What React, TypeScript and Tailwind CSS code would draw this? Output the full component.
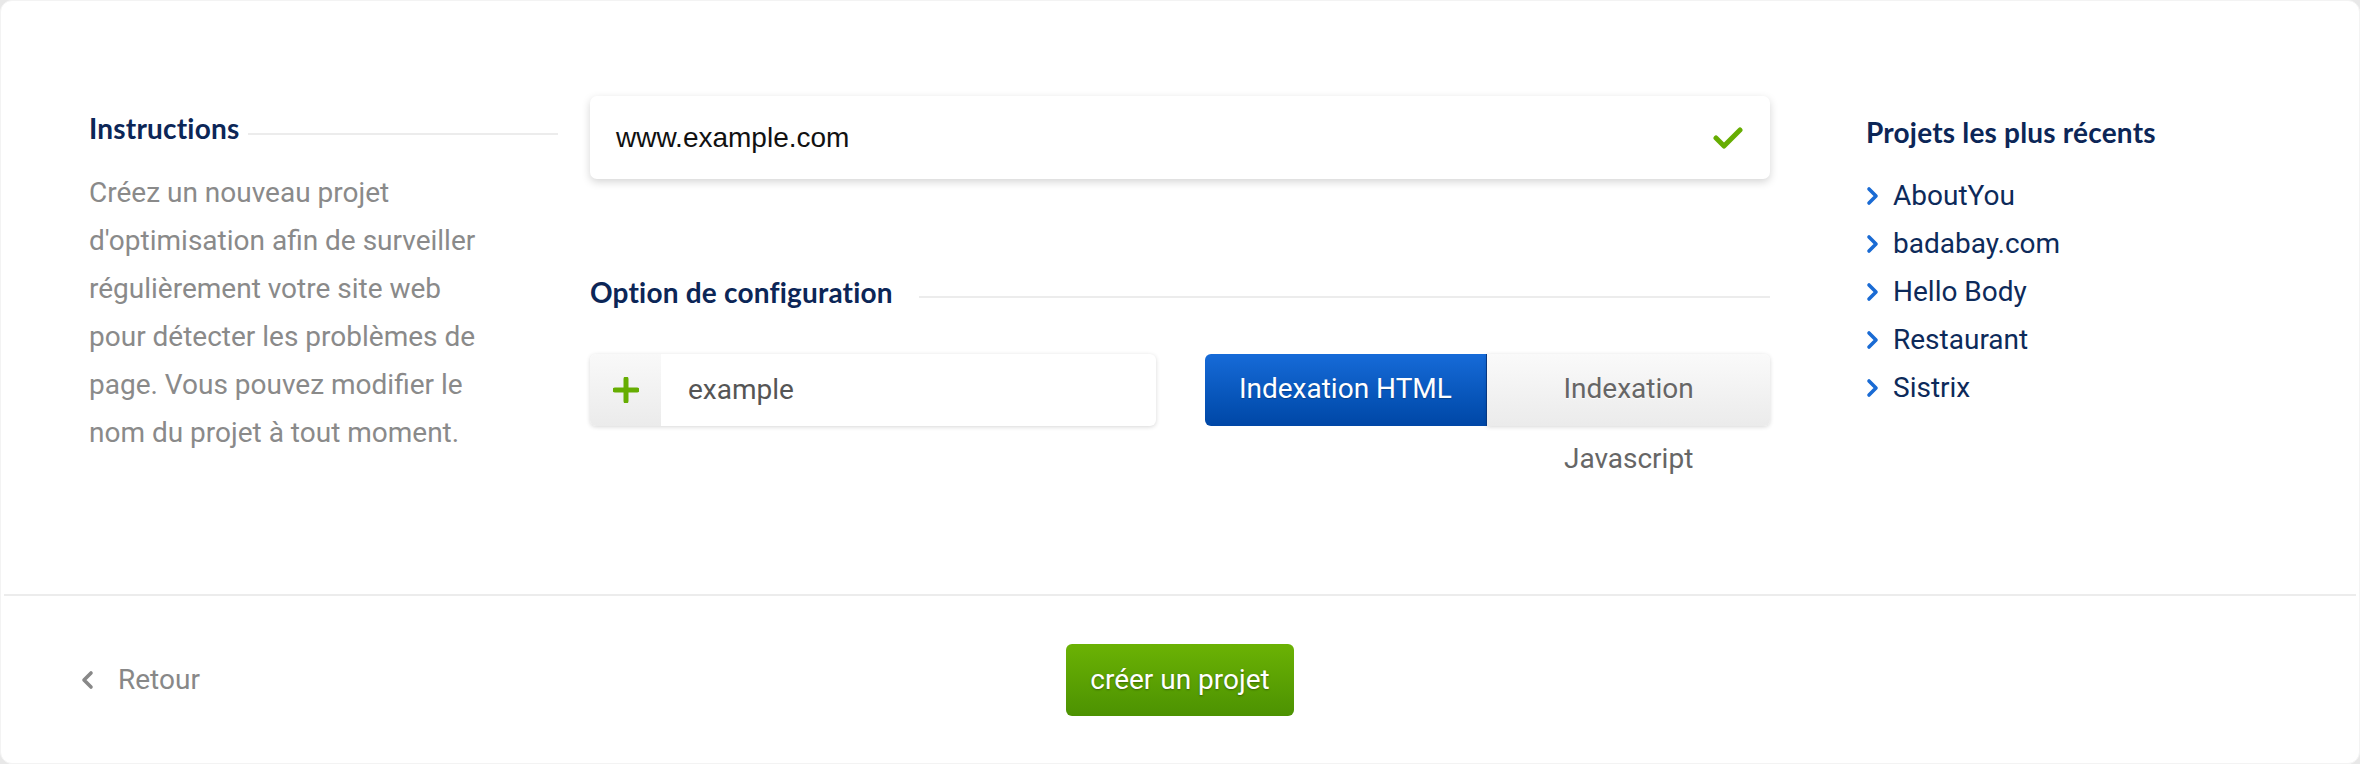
import React from "react";

const projects = ["AboutYou", "badabay.com", "Hello Body", "Restaurant", "Sistrix"];

const instructionLines = [
  "Créez un nouveau projet",
  "d'optimisation afin de surveiller",
  "régulièrement votre site web",
  "pour détecter les problèmes de",
  "page. Vous pouvez modifier le",
  "nom du projet à tout moment.",
];

// small chevron used in the project list and the back link
const Chevron = ({ dir, className }: { dir: "left" | "right"; className: string }) => (
  <svg viewBox="0 0 14 20" className={className} fill="none">
    <polyline
      points={dir === "right" ? "3,3 10,10 3,17" : "11,3 4,10 11,17"}
      stroke="currentColor"
      strokeWidth="3.6"
      strokeLinecap="round"
      strokeLinejoin="round"
    />
  </svg>
);

const App: React.FC = () => {
  return (
    <div className="w-full h-[764px] bg-[#e8e8e8] font-['Roboto',sans-serif]">
      <div className="h-full rounded-[12px] border border-[#f3f3f3] bg-white flex flex-col">
        {/* Top section */}
        <div className="h-[593px] pt-[95px] pl-[88px] flex">
          {/* Instructions */}
          <div className="w-[469px]">
            <div className="mt-[16px] flex">
              <h2 className="font-['Lato',sans-serif] font-bold text-[28px] leading-[32px] text-[#0c2657] tracking-[0.2px]">
                Instructions
              </h2>
              <div className="flex-1 self-end mb-[9px] ml-[9px] h-[2px] bg-[#ececec]" />
            </div>
            <p className="mt-[25px] text-[28px] leading-[48px] text-[#8a8a8a]">
              {instructionLines.map((line) => (
                <span key={line} className="block whitespace-nowrap">
                  {line}
                </span>
              ))}
            </p>
          </div>

          {/* Middle column */}
          <div className="w-[1180px] ml-[32px]">
            <div className="h-[83px] rounded-[7px] bg-white shadow-[0_3px_9px_rgba(0,0,0,0.17)] flex items-center justify-between pl-[26px] pr-[27px]">
              <span className="font-['Liberation_Sans',sans-serif] text-[28px] text-[#111]">
                www.example.com
              </span>
              <svg viewBox="0 0 30 22" className="w-[30px] h-[22px]" fill="none">
                <polyline
                  points="3,11 11,19 27,3"
                  stroke="#66ad02"
                  strokeWidth="5"
                  strokeLinecap="round"
                  strokeLinejoin="round"
                />
              </svg>
            </div>

            <div className="mt-[97px] flex">
              <h2 className="font-['Lato',sans-serif] font-bold text-[28px] leading-[32px] text-[#0c2657] tracking-[0.2px]">
                Option de configuration
              </h2>
              <div className="flex-1 self-end mb-[10px] ml-[26px] h-[2px] bg-[#ececec]" />
            </div>

            <div className="mt-[46px] grid grid-cols-2 gap-[49px] items-start">
              {/* Project name */}
              <div className="h-[72px] rounded-[6px] bg-white shadow-[0_1px_4px_rgba(0,0,0,0.16)] flex overflow-hidden">
                <div className="w-[71px] bg-gradient-to-b from-[#f9f9f9] to-[#ebebeb] flex items-center justify-center">
                  <svg viewBox="0 0 26 26" className="w-[26px] h-[26px]">
                    <path d="M13 2v22M2 13h22" stroke="#66ad02" strokeWidth="5" strokeLinecap="round" />
                  </svg>
                </div>
                <div className="flex-1 flex items-center pl-[27px] text-[28px] text-[#555]">example</div>
              </div>

              {/* Indexation toggle */}
              <div className="grid grid-cols-2 items-start">
                <div className="h-[72px] rounded-l-[6px] bg-gradient-to-b from-[#166bd8] to-[#0047a6] border-r border-[#083c8a] text-center text-white text-[28px] leading-[70px] cursor-pointer [text-shadow:0_1px_1px_rgba(0,0,0,0.25)]">
                  Indexation HTML
                </div>
                <div className="h-[72px] rounded-r-[6px] bg-gradient-to-b from-[#fafafa] to-[#ebebeb] shadow-[0_1px_4px_rgba(0,0,0,0.16)] px-[26px] text-center text-[#666] text-[28px] leading-[70px] cursor-pointer [text-shadow:0_1px_1px_rgba(255,255,255,0.9)]">
                  Indexation Javascript
                </div>
              </div>
            </div>
          </div>

          {/* Recent projects */}
          <div className="ml-[96px] mt-[20px]">
            <h2 className="font-['Lato',sans-serif] font-bold text-[28px] leading-[32px] text-[#0c2657] tracking-[0.2px]">
              Projets les plus récents
            </h2>
            <ul className="mt-[24px]">
              {projects.map((p) => (
                <li key={p} className="flex items-center h-[48px] text-[28px] text-[#0d2a5a]">
                  <Chevron dir="right" className="w-[14px] h-[20px] text-[#1a6bd4]" />
                  <span className="ml-[13px]">{p}</span>
                </li>
              ))}
            </ul>
          </div>
        </div>

        <div className="mx-[3px] h-[2px] bg-[#ececec]" />

        {/* Footer */}
        <div className="flex-1 grid grid-cols-3 items-center">
          <div className="flex items-center pl-[79px] text-[28px] text-[#888]">
            <Chevron dir="left" className="w-[14px] h-[20px] text-[#888]" />
            <span className="ml-[24px]">Retour</span>
          </div>
          <div className="flex justify-center">
            <button className="w-[228px] h-[72px] rounded-[6px] bg-gradient-to-b from-[#6bb204] to-[#4c9202] text-white text-[28px] [text-shadow:0_1px_2px_rgba(0,0,0,0.35)]">
              créer un projet
            </button>
          </div>
          <div />
        </div>
      </div>
    </div>
  );
};

export default App;
